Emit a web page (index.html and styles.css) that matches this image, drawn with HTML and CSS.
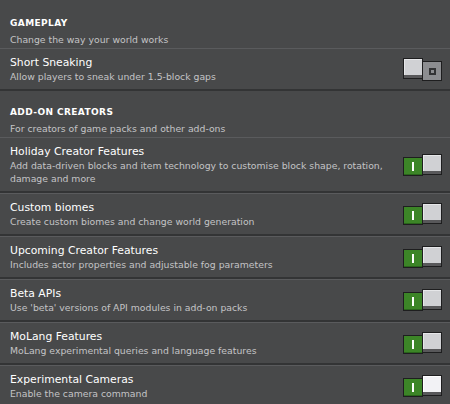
FILE: index.html
```html
<!DOCTYPE html>
<html>
<head>
<meta charset="utf-8">
<link rel="stylesheet" href="styles.css">
</head>
<body>
<div class="page">
  <div class="section-head">
    <div class="section-title">GAMEPLAY</div>
    <div class="section-sub">Change the way your world works</div>
  </div>
  <div class="row">
    <div class="text">
      <div class="title">Short Sneaking</div>
      <div class="desc">Allow players to sneak under 1.5-block gaps</div>
    </div>
    <div class="toggle off">
      <span class="knob"></span>
      <span class="track"><span class="ring"></span></span>
    </div>
  </div>

  <div class="section-head">
    <div class="section-title">ADD-ON CREATORS</div>
    <div class="section-sub">For creators of game packs and other add-ons</div>
  </div>
  <div class="row">
    <div class="text">
      <div class="title">Holiday Creator Features</div>
      <div class="desc">Add data-driven blocks and item technology to customise block shape, rotation, damage and more</div>
    </div>
    <div class="toggle on">
      <span class="track"><span class="bar"></span></span>
      <span class="knob"></span>
    </div>
  </div>
  <div class="row">
    <div class="text">
      <div class="title">Custom biomes</div>
      <div class="desc">Create custom biomes and change world generation</div>
    </div>
    <div class="toggle on">
      <span class="track"><span class="bar"></span></span>
      <span class="knob"></span>
    </div>
  </div>
  <div class="row">
    <div class="text">
      <div class="title">Upcoming Creator Features</div>
      <div class="desc">Includes actor properties and adjustable fog parameters</div>
    </div>
    <div class="toggle on">
      <span class="track"><span class="bar"></span></span>
      <span class="knob"></span>
    </div>
  </div>
  <div class="row">
    <div class="text">
      <div class="title">Beta APIs</div>
      <div class="desc">Use 'beta' versions of API modules in add-on packs</div>
    </div>
    <div class="toggle on">
      <span class="track"><span class="bar"></span></span>
      <span class="knob"></span>
    </div>
  </div>
  <div class="row">
    <div class="text">
      <div class="title">MoLang Features</div>
      <div class="desc">MoLang experimental queries and language features</div>
    </div>
    <div class="toggle on">
      <span class="track"><span class="bar"></span></span>
      <span class="knob"></span>
    </div>
  </div>
  <div class="row">
    <div class="text">
      <div class="title">Experimental Cameras</div>
      <div class="desc">Enable the camera command</div>
    </div>
    <div class="toggle on hover">
      <span class="track"><span class="bar"></span></span>
      <span class="knob"></span>
    </div>
  </div>
</div>
</body>
</html>
```

FILE: styles.css
```css
html, body {
  margin: 0;
  padding: 0;
  background: #48494a;
}
body {
  font-family: "DejaVu Sans", sans-serif;
  color: #ffffff;
  overflow: hidden;
}
.page {
  display: flex;
  flex-direction: column;
}
.section-head {
  padding: 17px 10px 2px 10px;
}
.section-title {
  font-weight: bold;
  font-size: 9px;
  line-height: 13px;
  letter-spacing: 0.4px;
  color: #ffffff;
}
.section-sub {
  margin-top: 3px;
  font-size: 9.3px;
  line-height: 13px;
  color: #c4c4c6;
}
.row {
  display: flex;
  align-items: center;
  justify-content: space-between;
  gap: 10px;
  padding: 7px 8px 6px 10px;
  border-top: 1px solid #5a5b5d;
  border-bottom: 2px solid #333435;
}
.row + .section-head {
  padding-top: 15px;
}
.text {
  flex: 1;
  max-width: 388px;
}
.title {
  font-size: 10.8px;
  line-height: 14px;
  color: #ffffff;
}
.desc {
  font-size: 9.3px;
  line-height: 13px;
  color: #c4c4c6;
}
.toggle {
  display: flex;
  align-items: flex-start;
  height: 23px;
  flex: none;
}
.knob {
  box-sizing: border-box;
  width: 20px;
  height: 21px;
  background: #d0d1d4;
  border: 1px solid #1e1e1f;
  box-shadow: inset 0 -3px 0 #58585a, inset 1px 1px 0 #e6e7e9;
}
.toggle.hover .knob {
  background: #f2f2f5;
  box-shadow: inset 0 -3px 0 #58585a, inset 1px 1px 0 #ffffff;
}
.track {
  box-sizing: border-box;
  width: 20px;
  height: 19px;
  margin-top: 3px;
  border: 1px solid #1e1e1f;
  display: flex;
  align-items: center;
  justify-content: center;
}
.toggle.off .track {
  background: #8c8d90;
  margin-left: -1px;
  width: 20px;
  height: 20px;
  margin-top: 3px;
}
.toggle.on .track {
  background: #3c8527;
  margin-right: -1px;
  box-shadow: inset 0 -1px 0 #2a641c;
}
.bar {
  width: 2px;
  height: 9px;
  background: #ffffff;
}
.ring {
  box-sizing: border-box;
  width: 7px;
  height: 7px;
  border: 2px solid #323334;
}
```
